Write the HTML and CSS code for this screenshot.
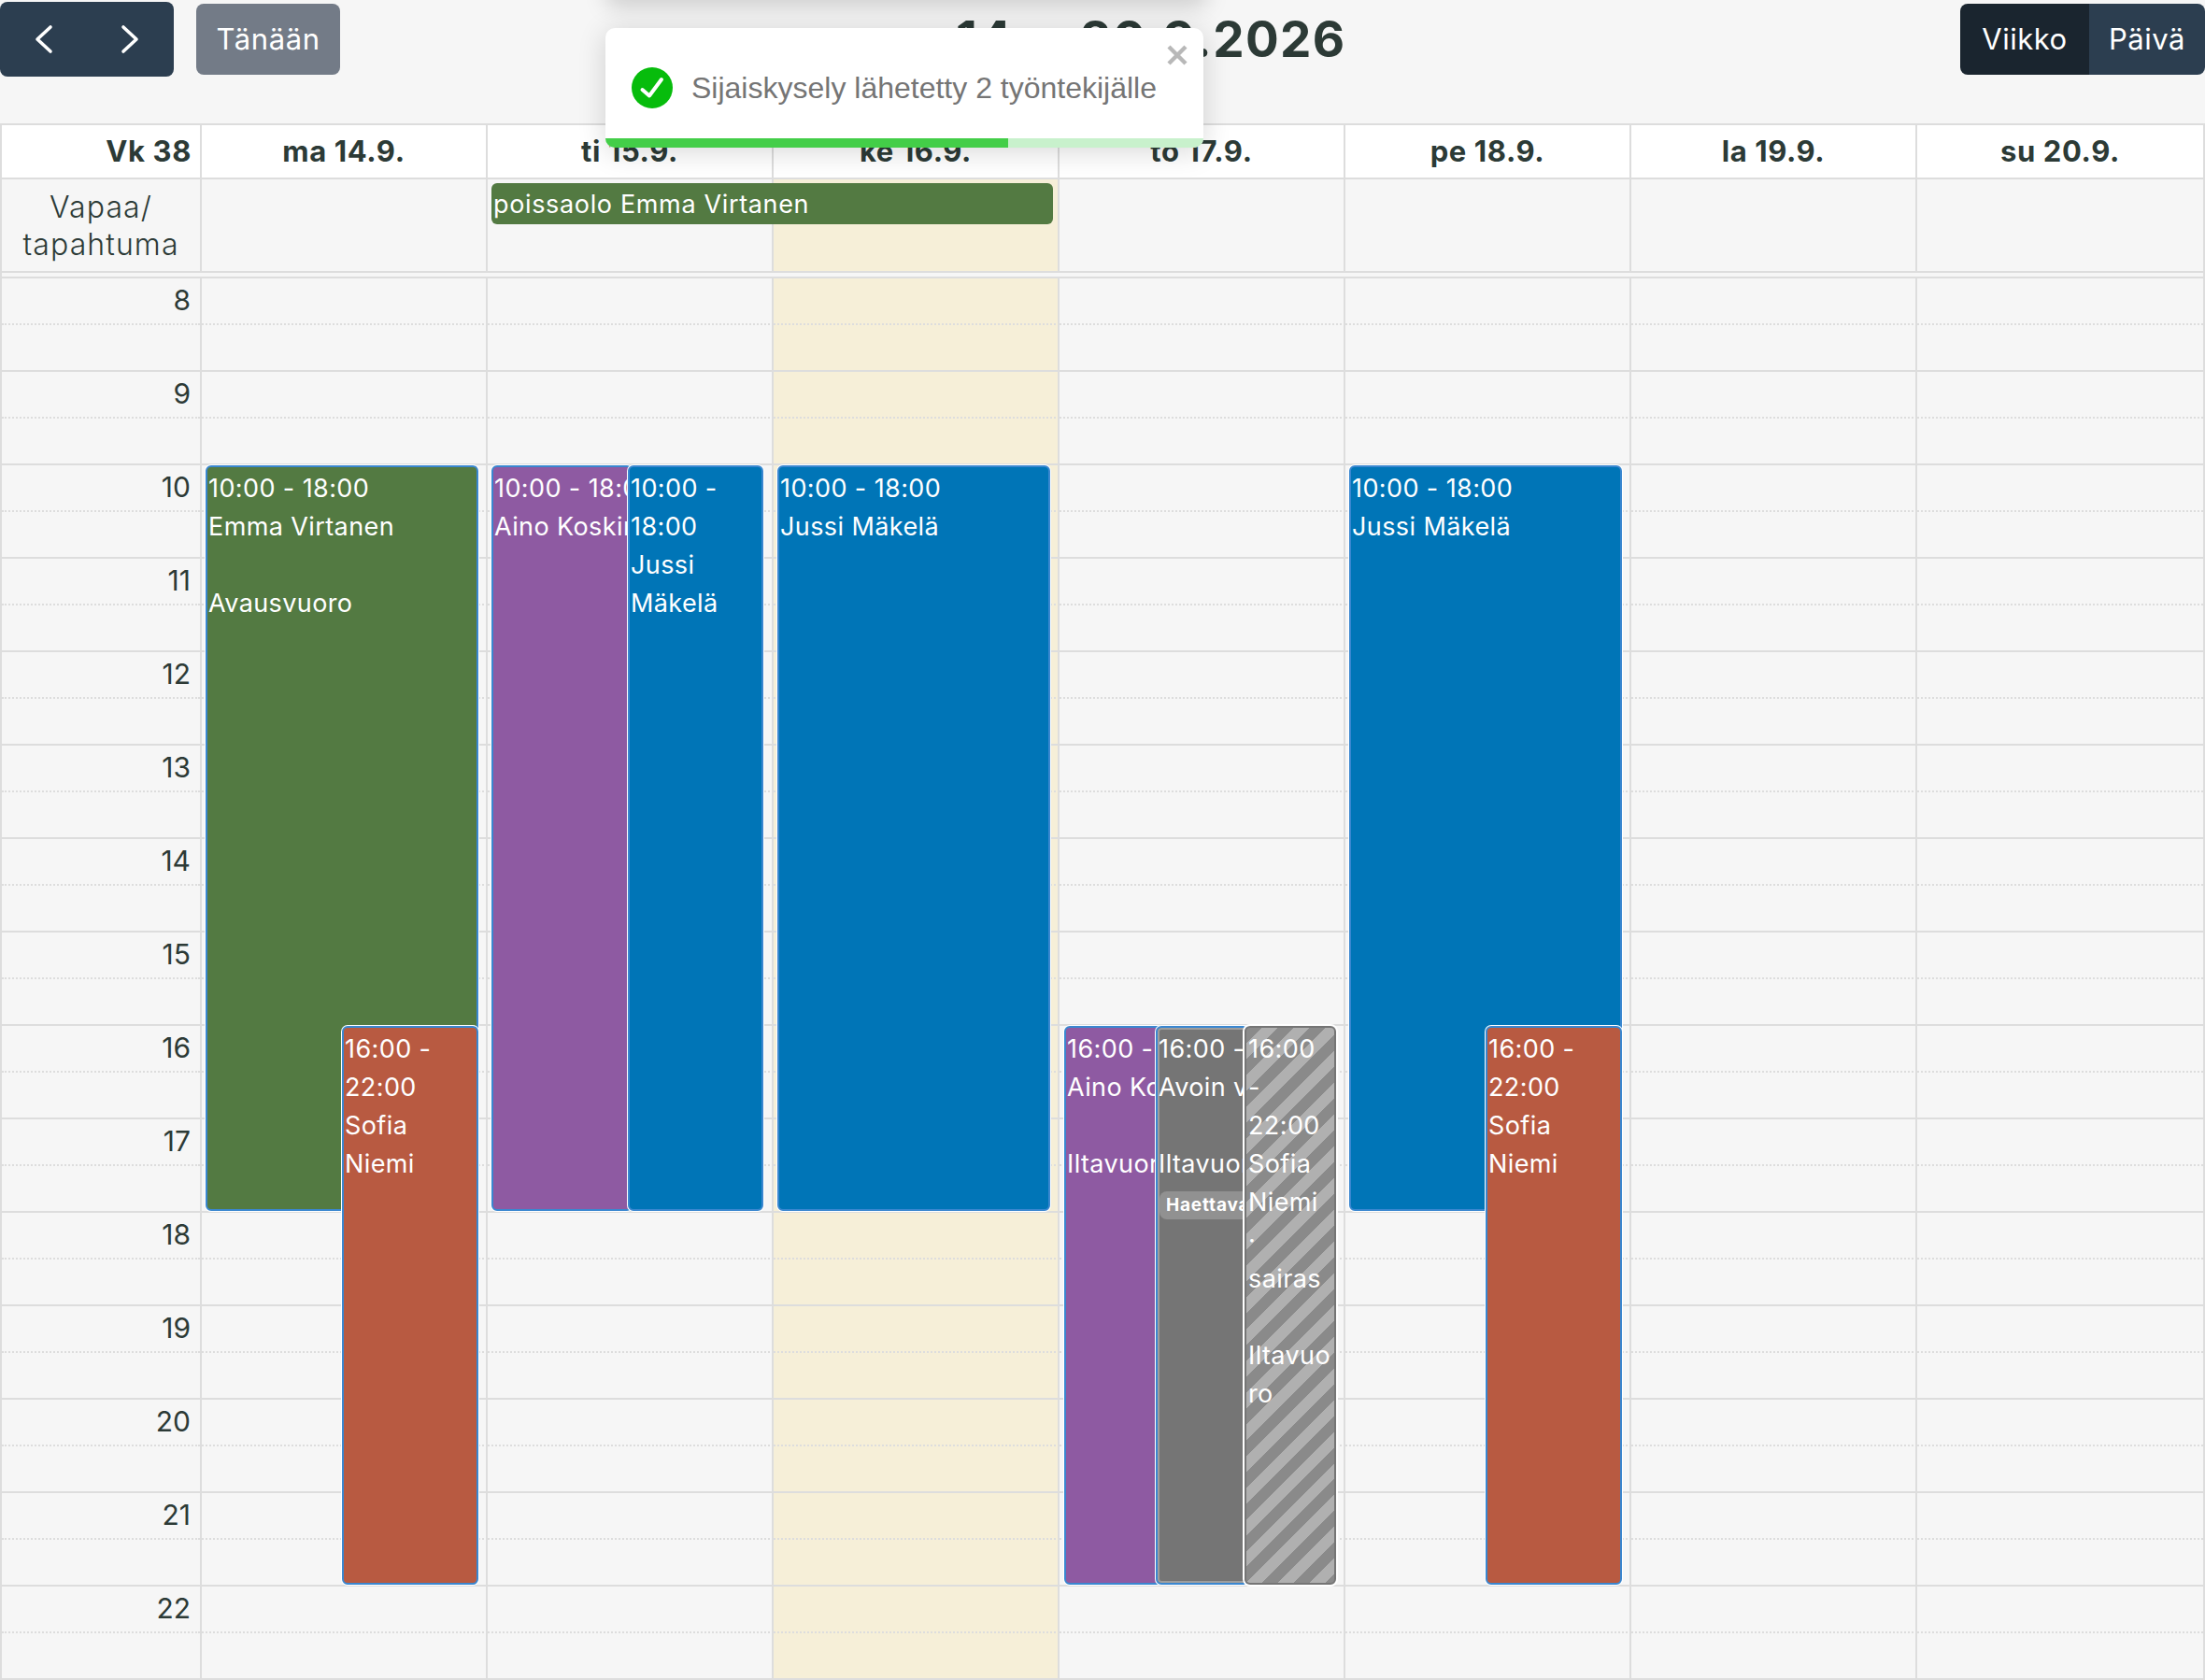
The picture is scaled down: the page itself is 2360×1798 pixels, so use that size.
FILE: index.html
```html
<!DOCTYPE html>
<html lang="fi">
<head>
<meta charset="utf-8">
<title>Kalenteri</title>
<link rel="stylesheet" href="styles.css">
</head>
<body>
<div class="page">
  <header class="toolbar">
    <div class="left-tools">
      <div class="nav-group">
        <button class="nav-btn"><svg width="24" height="32" viewBox="0 0 24 32"><path d="M20 3 6 16l14 13" transform="translate(-1 0)" fill="none" stroke="#fff" stroke-width="3.6" stroke-linecap="round" stroke-linejoin="round"/></svg></button>
        <button class="nav-btn"><svg width="24" height="32" viewBox="0 0 24 32"><path d="M5 3l14 13L5 29" transform="translate(-1 0)" fill="none" stroke="#fff" stroke-width="3.6" stroke-linecap="round" stroke-linejoin="round"/></svg></button>
      </div>
      <button class="today">Tänään</button>
    </div>
    <h1 class="range">14. – 20.9.2026</h1>
    <div class="view-group">
      <button class="view active">Viikko</button>
      <button class="view">Päivä</button>
    </div>
  </header>

  <div class="calendar">
    <div class="head-row">
      <div class="head-cell week">Vk 38</div>
      <div class="head-cell">ma 14.9.</div>
      <div class="head-cell">ti 15.9.</div>
      <div class="head-cell">ke 16.9.</div>
      <div class="head-cell">to 17.9.</div>
      <div class="head-cell">pe 18.9.</div>
      <div class="head-cell">la 19.9.</div>
      <div class="head-cell">su 20.9.</div>
    </div>
    <div class="allday-row">
      <div class="allday-label">Vapaa/<br>tapahtuma</div>
      <div class="allday-cell"></div>
      <div class="allday-cell"><div class="allday-event">poissaolo Emma Virtanen</div></div>
      <div class="allday-cell today-col"></div>
      <div class="allday-cell"></div>
      <div class="allday-cell"></div>
      <div class="allday-cell"></div>
      <div class="allday-cell"></div>
    </div>
    <div class="spacer"></div>
    <div class="time-grid">
      <div class="hours">
        <div class="hour">8</div><div class="hour">9</div><div class="hour">10</div><div class="hour">11</div><div class="hour">12</div><div class="hour">13</div><div class="hour">14</div><div class="hour">15</div><div class="hour">16</div><div class="hour">17</div><div class="hour">18</div><div class="hour">19</div><div class="hour">20</div><div class="hour">21</div><div class="hour">22</div>
      </div>
      <div class="day">
        <div class="ev green" style="top:200px;height:798px;left:4px;width:292px"><p>10:00 - 18:00</p><p>Emma Virtanen</p><p>&nbsp;</p><p>Avausvuoro</p></div>
        <div class="ev red" style="top:800px;height:598px;left:150px;width:146px"><p>16:00 -</p><p>22:00</p><p>Sofia</p><p>Niemi</p></div>
      </div>
      <div class="day">
        <div class="ev purple" style="top:200px;height:798px;left:4px;width:151px"><p class="nw">10:00 - 18:00</p><p class="nw">Aino Koskinen</p></div>
        <div class="ev blue" style="top:200px;height:798px;left:150px;width:145px"><p>10:00 -</p><p>18:00</p><p>Jussi</p><p>Mäkelä</p></div>
      </div>
      <div class="day today-col">
        <div class="ev blue" style="top:200px;height:798px;left:4px;width:292px"><p>10:00 - 18:00</p><p>Jussi Mäkelä</p></div>
      </div>
      <div class="day">
        <div class="ev purple" style="top:800px;height:598px;left:5px;width:105px"><p class="nw">16:00 - 22:00</p><p class="nw">Aino Koskinen</p><p>&nbsp;</p><p class="nw">Iltavuoro</p></div>
        <div class="ev grey" style="top:800px;height:598px;left:103px;width:100px"><p class="nw">16:00 - 22:00</p><p class="nw">Avoin vuoro</p><p>&nbsp;</p><p class="nw">Iltavuoro</p><span class="tag">Haettava</span></div>
        <div class="ev striped" style="top:800px;height:598px;left:198px;width:98px"><p>16:00</p><p>-</p><p>22:00</p><p>Sofia</p><p>Niemi</p><p>·</p><p>sairas</p><p>&nbsp;</p><p>Iltavuo</p><p>ro</p></div>
      </div>
      <div class="day">
        <div class="ev blue" style="top:200px;height:798px;left:4px;width:292px"><p>10:00 - 18:00</p><p>Jussi Mäkelä</p></div>
        <div class="ev red" style="top:800px;height:598px;left:150px;width:146px"><p>16:00 -</p><p>22:00</p><p>Sofia</p><p>Niemi</p></div>
      </div>
      <div class="day"></div>
      <div class="day"></div>
    </div>
  </div>
</div>

<div class="toast-shadow"></div>
<div class="toast">
  <svg class="toast-close" width="22" height="22" viewBox="0 0 22 22"><path d="M2 2l18 18M20 2 2 20" fill="none" stroke="#b8b8b8" stroke-width="4.4"/></svg>
  <svg class="toast-icon" width="44" height="44" viewBox="0 0 44 44"><circle cx="22" cy="22" r="22" fill="#07bc0c"/><path d="M11.5 24l7.500 6.500L32 13" fill="none" stroke="#fff" stroke-width="4" stroke-linecap="round" stroke-linejoin="round"/></svg>
  <span class="toast-text">Sijaiskysely lähetetty 2 työntekijälle</span>
  <div class="toast-bar"><div class="toast-progress"></div></div>
</div>
</body>
</html>
```
FILE: styles.css
```css
* { box-sizing: border-box; }
html, body { margin: 0; padding: 0; }
body {
  width: 2360px; height: 1798px; overflow: hidden;
  background: #f6f6f6; color: #2c3a36;
  font-family: "Inter", "Liberation Sans", sans-serif;
}
.page { display: flex; flex-direction: column; }
button { font-family: inherit; border: 0; color: #fff; margin: 0; }

.toolbar { height: 132px; display: flex; justify-content: space-between; align-items: flex-start; position: relative; }
.left-tools { display: flex; align-items: flex-start; gap: 24px; padding-top: 2px; }
.nav-group { display: flex; width: 186px; height: 80px; background: #2c3e50; border-radius: 8px; overflow: hidden; }
.nav-btn { flex: 1; background: transparent; display: flex; align-items: center; justify-content: center; padding: 0; }
.today { width: 154px; height: 76px; margin-top: 2px; background: #737b87; border-radius: 8px; font-size: 31px; letter-spacing: .6px; padding: 0 0 2px; }
.range { position: absolute; left: 1023px; top: 10px; margin: 0; font-size: 53px; line-height: 64px; font-weight: 700; letter-spacing: 1.4px; color: #2c3a36; white-space: nowrap; }
.view-group { display: flex; margin-top: 4px; height: 76px; border-radius: 8px; overflow: hidden; }
.view { background: #2c3e50; font-size: 31px; letter-spacing: .5px; padding: 0 0 2px; width: 124px; }
.view.active { background: #1a252f; width: 138px; }

.calendar { border-left: 2px solid #ddd; border-right: 2px solid #ddd; }
.head-row, .allday-row, .time-grid { display: grid; grid-template-columns: 212px repeat(6, 306px) 1fr; }
.head-row { height: 60px; background: #fff; border-top: 2px solid #ddd; border-bottom: 2px solid #ddd; }
.head-cell { display: flex; align-items: center; justify-content: center; font-size: 31px; letter-spacing: .6px; font-weight: 700; border-left: 2px solid #ddd; padding-bottom: 2px; }
.head-cell.week { justify-content: flex-end; border-left: 0; padding-right: 9px; }
.allday-row { height: 98px; }
.allday-label { font-size: 32px; letter-spacing: 1.1px; line-height: 40px; text-align: center; padding-top: 10px; font-weight: 300; }
.allday-cell { border-left: 2px solid #ddd; position: relative; }
.allday-event { position: absolute; left: 4px; top: 4px; width: 601px; height: 44px; background: #537a42; color: #fff; border-radius: 6px; font-size: 27px; letter-spacing: .65px; line-height: 45px; padding-left: 2px; z-index: 1; white-space: nowrap; }
.today-col { background-color: #f6efd8; }
.spacer { height: 8px; border-top: 2px solid #ddd; border-bottom: 2px solid #ddd; }

.time-grid { position: relative; height: 1500px; }
.hours { display: flex; flex-direction: column; }
.hour { height: 100px; flex: none; text-align: right; padding: 5px 10px 0 0; font-size: 30px; line-height: 36px; font-weight: 400; border-bottom: 2px solid #ddd; position: relative; }
.hour::after { content: ""; position: absolute; left: 0; right: 0; top: 48px; border-top: 2px dotted #ddd; }
.day {
  border-left: 2px solid #ddd; position: relative;
  background-image:
    linear-gradient(to bottom, transparent 98px, #ddd 98px, #ddd 100px),
    radial-gradient(circle at 1px 1px, #ddd 1px, transparent 1.2px);
  background-size: 100% 100px, 4px 100px;
  background-position: 0 0, 0 48px;
}

.ev {
  position: absolute; color: #fff; font-size: 27px; letter-spacing: .4px; line-height: 41px;
  border: 2px solid #3a87d0; border-radius: 6px; box-shadow: 0 0 0 1px #fff;
  padding: 2px 0 0 1px; overflow: hidden;
}
.ev p { margin: 0; }
.ev .nw { white-space: nowrap; }
.green { background: #537a42; }
.red { background: #b85a41; }
.purple { background: #8e5aa2; }
.blue { background: #0075b7; }
.grey { background: #757575; box-shadow: 0 0 0 1px #fff, inset 0 0 0 2px #9e9e9e; }
.striped {
  border-color: #757575; box-shadow: 0 0 0 2px #fff; padding-left: 2px;
  background: repeating-linear-gradient(135deg, #8a8a8a 0, #8a8a8a 12px, #b0b0b0 12px, #b0b0b0 24px);
}
.tag { display: block; width: 120px; height: 30px; margin: 9px 0 0 1px; padding-left: 7px; background: #919191; border-radius: 8px; font-size: 19px; letter-spacing: .8px; line-height: 30px; font-weight: 700; white-space: nowrap; }

.toast-shadow { position: absolute; left: 650px; top: -30px; width: 640px; height: 30px; box-shadow: 0 6px 24px rgba(0,0,0,.18); }
.toast {
  position: absolute; left: 648px; top: 30px; width: 640px; height: 128px;
  background: #fff; border-radius: 10px; box-shadow: 0 4px 30px rgba(0,0,0,.16);
  font-family: "Liberation Sans", Arial, sans-serif; overflow: hidden;
  display: flex; align-items: center; padding-left: 28px; z-index: 5;
}
.toast-icon { flex: none; margin-right: 20px; }
.toast-text { font-size: 32px; color: #757575; white-space: nowrap; }
.toast-close { position: absolute; right: 17px; top: 18px; }
.toast-bar { position: absolute; left: 0; right: 0; bottom: 0; height: 10px; background: #c8f1cc; }
.toast-progress { width: 67.3%; height: 100%; background: #43ce48; }
```
